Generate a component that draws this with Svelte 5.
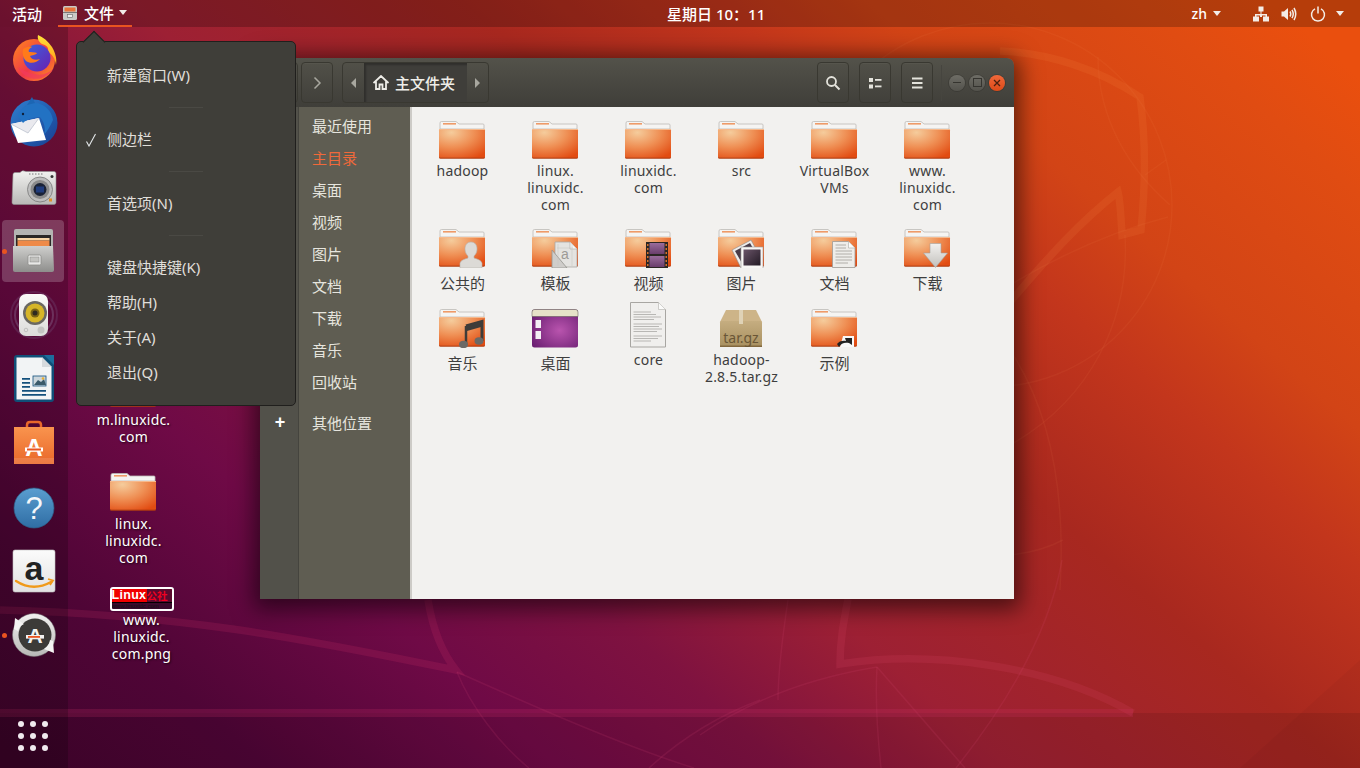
<script>
  const dockTop = ['firefox', 'thunderbird', 'camera', 'files', 'speaker', 'writer', 'store', 'help', 'amazon', 'updater']
  // vertical nudge of each dock icon inside its 64px cell
  const dockLift = { firefox: 2, thunderbird: 3, camera: 1.5, files: 0, speaker: 3, writer: 4, store: -1, help: 2, amazon: 3, updater: 3 }

  const menu = [
    { label: '新建窗口(W)', sep: true },
    { label: '侧边栏', check: true, sep: true },
    { label: '首选项(N)', sep: true },
    { label: '键盘快捷键(K)' },
    { label: '帮助(H)' },
    { label: '关于(A)' },
    { label: '退出(Q)' }
  ]

  const places = ['最近使用', '主目录', '桌面', '视频', '图片', '文档', '下载', '音乐', '回收站']

  const files = [
    { lines: ['hadoop'], icon: 'folder' },
    { lines: ['linux.', 'linuxidc.', 'com'], icon: 'folder' },
    { lines: ['linuxidc.', 'com'], icon: 'folder' },
    { lines: ['src'], icon: 'folder' },
    { lines: ['VirtualBox', 'VMs'], icon: 'folder' },
    { lines: ['www.', 'linuxidc.', 'com'], icon: 'folder' },
    { lines: ['公共的'], icon: 'folder', over: 'person', zh: true },
    { lines: ['模板'], icon: 'folder', over: 'template', zh: true },
    { lines: ['视频'], icon: 'folder', over: 'film', zh: true },
    { lines: ['图片'], icon: 'folder', over: 'photo', zh: true },
    { lines: ['文档'], icon: 'folder', over: 'doc', zh: true },
    { lines: ['下载'], icon: 'folder', over: 'down', zh: true },
    { lines: ['音乐'], icon: 'folder', over: 'note', zh: true },
    { lines: ['桌面'], icon: 'desktop', zh: true },
    { lines: ['core'], icon: 'text' },
    { lines: ['hadoop-', '2.8.5.tar.gz'], icon: 'tar' },
    { lines: ['示例'], icon: 'folder', over: 'link', zh: true }
  ]
</script>

{#snippet folderArt()}
  <path d="M2 17V11Q2 9.500 3.500 9.500H18L21 12H45Q46 12 46 13V17Z" fill="#f5f4f2" stroke="#bdbab6" stroke-width=".8" />
  <rect x="5" y="11" width="13" height="1.600" fill="#ee9a68" />
  <rect x="1" y="17" width="46" height="29.500" rx="1.500" fill="url(#folderBody)" />
  <path d="M1 18H47V17H1Z" fill="#f6b98c" />
  <path d="M2.500 46.500H45.500Q47 46.500 47 45V44.800Q47 45.800 45.500 45.800H2.500Q1 45.800 1 44.800V45Q1 46.500 2.500 46.500Z" fill="#97330d" />
{/snippet}

{#snippet overlay(kind)}
  {#if kind === 'person'}
    <path d="M33 22c-4 0-6 3-6 7 0 3 1 5 3 7v2c-3 1-7 2-8 5v5h22v-5c-1-3-5-4-8-5v-2c2-2 3-4 3-7 0-4-2-7-6-7z" fill="#dcdad6" stroke="#b5b2ac" stroke-width=".6" />
  {:else if kind === 'template'}
    <path d="M24 22H39L46 29V47H24Z" fill="#e4e3e0" stroke="#aaa8a4" stroke-width=".8" />
    <path d="M39 22V29H46" fill="#f5f5f3" stroke="#aaa8a4" stroke-width=".6" />
    <path d="M21 30L36 48H21Z" fill="#cfcdca" stroke="#96948f" stroke-width=".8" />
    <text x="30" y="39" font-size="14" fill="#9c9a96" font-family="Liberation Sans">a</text>
    <path d="M26 28H42M27 24V46M41 24V46" stroke="#c4c2be" stroke-width=".5" fill="none" />
  {:else if kind === 'film'}
    <rect x="22" y="22" width="22" height="26" fill="#2b2623" />
    <rect x="25.500" y="23" width="15" height="11" fill="url(#filmFrame)" />
    <rect x="25.500" y="36" width="15" height="11" fill="url(#filmFrame)" />
    <path d="M23 24h1.500v2H23zM23 28h1.500v2H23zM23 32h1.500v2H23zM23 36h1.500v2H23zM23 40h1.500v2H23zM23 44h1.500v2H23zM41.500 24H43v2h-1.500zM41.500 28H43v2h-1.500zM41.500 32H43v2h-1.500zM41.500 36H43v2h-1.500zM41.500 40H43v2h-1.500zM41.500 44H43v2h-1.500z" fill="#d2702c" />
  {:else if kind === 'photo'}
    <path d="M15 30L34 20L44 38L24 48Z" fill="#eeedeb" stroke="#8b8986" stroke-width=".6" />
    <path d="M18 31L33 23L41 37L26 45Z" fill="#4a3c48" />
    <rect x="24" y="27" width="22" height="21.500" fill="#f7f6f4" stroke="#9a9895" stroke-width=".6" />
    <rect x="26.500" y="29.500" width="17" height="16" fill="url(#photoFrame)" />
  {:else if kind === 'doc'}
    <path d="M22.500 21.500H38.500L45 28V47.500H22.500Z" fill="#eeedea" stroke="#9d9b97" stroke-width=".8" />
    <path d="M38.500 21.500V28H45" fill="#fbfbfa" stroke="#a9a7a3" stroke-width=".6" />
    <path d="M25.500 25H36M25.500 28H36M25.500 31H42M25.500 34H42M25.500 37H42M25.500 40H42M25.500 43H38" stroke="#a9a7a3" stroke-width=".9" />
  {:else if kind === 'down'}
    <path d="M27 23.500H38V33H44.500L32.500 47.500L20.500 33H27Z" fill="url(#downFill)" stroke="#a5a39f" stroke-width=".6" />
  {:else if kind === 'note'}
    <path d="M28 26L44 21.500V41" stroke="#3e3c39" stroke-width="3" fill="none" />
    <path d="M28 26V45" stroke="#3e3c39" stroke-width="2.500" fill="none" />
    <path d="M29 25L43 21V27L29 31Z" fill="#3e3c39" />
    <ellipse cx="25.500" cy="44.500" rx="4.500" ry="3.700" fill="#6b6966" />
    <ellipse cx="41" cy="41" rx="4.500" ry="3.700" fill="#6b6966" />
  {:else if kind === 'link'}
    <path d="M33 36H44V47H30Z" fill="#f8f8f8" />
    <path d="M27 44C29 41 33 40 36 41L35 38L42 38V45L39 43C35 42 31 43 29 47Z" fill="#222" />
  {/if}
{/snippet}

{#snippet fileIcon(kind, over)}
  <svg class="ficon" viewBox="0 0 48 48" width="48" height="48">
    {#if kind === 'folder'}
      {@render folderArt()}
      {@render overlay(over)}
    {:else if kind === 'desktop'}
      <rect x="1" y="9.500" width="46" height="38" rx="2.500" fill="url(#purpleBody)" />
      <path d="M1 16.500V12Q1 9.500 3.500 9.500H44.500Q47 9.500 47 12V16.500Z" fill="#e6e2c8" stroke="#55504a" stroke-width=".5" />
      <rect x="4.500" y="20" width="5.500" height="8" fill="#f3eef4" />
      <rect x="4.500" y="31" width="5.500" height="8" fill="#f3eef4" />
    {:else if kind === 'text'}
      <path d="M6.500 2.500H34.500L41.500 9.500V47H6.500Z" fill="#f0efed" stroke="#a8a6a2" />
      <path d="M34.500 2.500V9.500H41.500" fill="#fbfbfa" stroke="#bcbab6" stroke-width=".7" />
      <path d="M9.500 12H27M9.500 14.500H32M9.500 17H37M9.500 19.500H30M9.500 24H38M9.500 26.500H35M9.500 29H38M9.500 31.500H33M9.500 36H38M9.500 38.500H34M9.500 41H27" stroke="#aaa8a4" stroke-width=".8" />
    {:else if kind === 'tar'}
      <path d="M9 10H39L45 22H3Z" fill="#cdb488" />
      <rect x="3" y="21" width="42" height="26" rx="1.500" fill="url(#tarBody)" />
      <rect x="22" y="10" width="4" height="14" fill="#dfd2b6" />
      <rect x="3" y="45.500" width="42" height="1.500" fill="#82683e" />
      <text x="24" y="43" text-anchor="middle" font-size="14" font-family="Noto Sans" fill="#6a5636">tar.gz</text>
    {/if}
  </svg>
{/snippet}

{#snippet dockIcon(name)}
  <svg viewBox="0 {dockLift[name]} 64 64" width="64" height="64">
    {#if name === 'firefox'}
      <circle cx="33" cy="35" r="21" fill="url(#foxOuter)" />
      <path d="M37 10c5 2 10 6 14 12 4 7 5 13 4 18-1-7-4-11-8-13 1-5-2-7-6-8-3-2-5-5-4-9z" fill="url(#foxTail)" />
      <circle cx="36" cy="33" r="13.500" fill="url(#foxGlobe)" />
      <path d="M22 24c3-2 7-3 9-2-2 1-4 3-3 5 2 0 6 0 8 1-1 2-5 2-7 3 1 3 5 5 10 3-3 4-10 5-14 2-3-3-4-8-3-12z" fill="#ff7a1a" />
      <path d="M17 42c4 9 14 14 24 11 5-2 9-5 12-10-5 5-12 8-19 6-7-1-13-4-17-7z" fill="#f23a5c" opacity=".7" />
    {:else if name === 'thunderbird'}
      <circle cx="33" cy="35" r="23.500" fill="url(#tbBlue)" />
      <path d="M10 36L38 30L45 52L17 55Z" fill="#fff" />
      <path d="M10 36L27 45L38 30" fill="#e9e9ee" stroke="#b4bcc8" stroke-width=".7" />
      <path d="M17 28c3-9 10-13 17-13 9 0 17 8 18 17-3 7-6 11-9 15 2-7 0-13-4-18-6 0-13 2-17 6-2-3-3-5-5-7z" fill="#2272c3" />
      <circle cx="22" cy="26" r="1.200" fill="#10203a" />
      <path d="M31 9l3 6-8 2z" fill="#1c66b4" />
    {:else if name === 'camera'}
      <path d="M12 21Q12 19 14 19H19Q21 16 25 18H53Q55 18 55 20V49Q55 51 53 51H13Q11 51 11 49Z" fill="url(#silver)" stroke="#8d8d8d" stroke-width=".6" />
      <circle cx="39" cy="36" r="12.500" fill="#bdbdbd" stroke="#777" stroke-width=".8" />
      <circle cx="39" cy="36" r="9.500" fill="#8b8b8b" />
      <circle cx="39" cy="36" r="6.500" fill="#1a2236" />
      <rect x="35" y="33" width="8" height="6" fill="#203c7c" />
      <rect x="48" y="45" width="3" height="3" fill="#e09028" />
      <circle cx="51" cy="23" r="1.500" fill="#333" />
      <path d="M28 20.500h15" stroke="#777" stroke-width="1" stroke-dasharray="1.500 1.500" />
    {:else if name === 'files'}
      <path d="M13 12Q13 10 15 10H50Q52 10 52 12V28H13Z" fill="#b4b4b2" />
      <rect x="15" y="16" width="35" height="12" fill="#2a2826" />
      <rect x="16.500" y="19" width="32" height="2.500" fill="#f8d6a8" />
      <rect x="16.500" y="21.500" width="32" height="5.500" fill="#ee8a48" />
      <path d="M12 27H52L53 51Q53 53 51 53H14Q12 53 12 51Z" fill="url(#drawer)" />
      <rect x="27" y="36" width="13" height="10" rx="1.500" fill="#e8e8e6" stroke="#8b8b88" stroke-width=".8" />
      <rect x="29" y="38" width="9" height="5" fill="#c2c2bf" stroke="#777" stroke-width=".4" />
    {:else if name === 'speaker'}
      <circle cx="33" cy="35" r="23" fill="none" stroke="#8c8cb0" stroke-opacity=".18" stroke-width="2" />
      <circle cx="33" cy="35" r="19" fill="none" stroke="#a8a8c8" stroke-opacity=".25" stroke-width="2" />
      <rect x="18" y="14" width="29" height="42" rx="7" fill="url(#speakerBody)" />
      <circle cx="34" cy="33" r="12" fill="#6a6862" />
      <circle cx="34" cy="33" r="9.500" fill="#d6b528" />
      <circle cx="34" cy="33" r="4.500" fill="#7a6414" />
      <circle cx="34" cy="33" r="2.500" fill="#2e2a20" />
      <circle cx="40" cy="50" r="3.500" fill="#c4c4c2" />
      <circle cx="25" cy="50" r="1.800" fill="none" stroke="#c0c0be" />
    {:else if name === 'writer'}
      <path d="M13 15Q13 12 16 12H44L53 21V56Q53 59 50 59H16Q13 59 13 56Z" fill="#104f78" />
      <path d="M15.500 14.500H41L50.500 24V56.500H15.500Z" fill="#f2f4f5" />
      <path d="M43 12H53V22Z" fill="#1c6e9c" />
      <path d="M41 14L51 24H41Z" fill="#d6dadd" />
      <path d="M21 35h8v1.800h-8zM21 39h8v1.800h-8zM21 43h8v1.800h-8zM21 47h24v1.800H21zM21 51h24v1.800H21z" fill="#13507c" />
      <rect x="32" y="33" width="13" height="10" fill="#ccd6dc" stroke="#13507c" stroke-width=".8" />
      <path d="M33 42l4-5 3 2 3-3 2 6z" fill="#3a5a6a" />
      <circle cx="42" cy="35.500" r="1.300" fill="#eab030" />
    {:else if name === 'store'}
      <path d="M26 16V13Q26 10 29 10H37Q40 10 40 13V16" fill="none" stroke="#e9682a" stroke-width="2.500" />
      <path d="M13 15H53V52H13Z" fill="url(#storeBag)" />
      <rect x="13" y="46" width="40" height="6" fill="#ffffff" fill-opacity=".12" />
      <text x="33" y="44" text-anchor="middle" font-size="24" font-weight="700" font-family="Liberation Sans" fill="#fff">A</text>
      <rect x="24" y="35.500" width="18" height="4" fill="#fff" />
      <rect x="26" y="36.500" width="14" height="2" fill="#e95420" />
    {:else if name === 'help'}
      <circle cx="33" cy="35" r="20" fill="url(#helpBlue)" stroke="#2c5d86" stroke-width=".7" />
      <text x="33" y="46" text-anchor="middle" font-size="31" font-family="Liberation Sans" fill="#f4f7fa">?</text>
    {:else if name === 'amazon'}
      <rect x="12" y="14" width="42" height="42" rx="2" fill="url(#amazonBg)" stroke="#c4c4c4" stroke-width=".6" />
      <text x="33" y="44" text-anchor="middle" font-size="34" font-weight="700" font-family="Liberation Sans" fill="#222">a</text>
      <path d="M15 45Q32 56 50 46" fill="none" stroke="#f09a1a" stroke-width="2.400" stroke-linecap="round" />
      <path d="M47 43L52 44.500L49 49" fill="none" stroke="#f09a1a" stroke-width="1.800" />
    {:else if name === 'updater'}
      <circle cx="33" cy="35" r="21.500" fill="url(#silver)" stroke="#777" stroke-width=".5" />
      <circle cx="34" cy="35" r="16.500" fill="#3c3b38" />
      <text x="34" y="43" text-anchor="middle" font-size="21" font-weight="700" font-family="Liberation Sans" fill="#f2f2f0">A</text>
      <rect x="25" y="35" width="18" height="3.600" fill="#f2f2f0" />
      <rect x="27" y="36" width="12" height="1.800" fill="#e95420" />
      <path d="M13 29L14 18L23 24Q18 26 17 31Z" fill="#f4f4f2" />
      <path d="M52 41L53 53L43 49Q48 46 49 40Z" fill="#f4f4f2" />
    {/if}
  </svg>
{/snippet}

<div class="screen">
  <svg class="wall" viewBox="0 0 1360 768" width="1360" height="768" aria-hidden="true">
    <rect x="0" y="713" width="1360" height="55" fill="#000" fill-opacity=".09" />
    <path d="M1360 660L1240 768H1360Z" fill="#000" fill-opacity=".03" />
    <g fill="none" stroke="#ff9a60" stroke-opacity=".07" stroke-width="1.500">
      <circle cx="990" cy="205" r="182" />
      <path d="M1098 57C1098 120 1130 170 1170 205" />
      <path d="M1125 235C1130 320 1090 400 1010 445" />
      <path d="M1168 217C1110 232 1060 255 1010 285" />
      <path d="M1166 160L1145 175" />
      <path d="M1010 350C1050 410 1066 490 1060 590" />
      <path d="M1010 555Q1040 552 1063 540" />
    </g>
    <g fill="none" stroke="#e0507a" stroke-opacity=".13" stroke-width="1.500">
      <path d="M788 600C782 640 778 670 778 700" />
      <path d="M700 735C750 700 810 678 877 667" />
      <path d="M877 667C875 700 878 740 881 768" />
      <path d="M877 667L965 768" />
      <path d="M1062 560C1050 630 1010 700 956 768" />
      <path d="M457 672C520 700 620 745 694 768" />
      <path d="M457 672C470 705 500 745 529 768" />
      <path d="M649 768C685 735 720 715 760 700" />
    </g>
    <g fill="none" stroke-width="7.500" stroke-linejoin="miter">
      <path d="M1000 51C1050 53 1100 70 1140 97C1146 140 1146 180 1141 230L1122 235C1121 215 1120 200 1118 192C1080 222 1050 255 1010 302" stroke="#ff9a50" stroke-opacity=".11" />
      <path d="M0 610C200 615 330 645 456 670C440 650 432 625 428 600" stroke="#d0306a" stroke-opacity=".18" />
      <path d="M848 599C844 620 840 640 840 664C930 650 1050 665 1133 713" stroke="#d04060" stroke-opacity=".2" />
    </g>
    <rect x="0" y="709" width="1133" height="8" fill="#d0306a" fill-opacity=".2" />
  </svg>

  <svg class="defs" width="0" height="0" aria-hidden="true">
    <defs>
      <radialGradient id="folderBody" cx=".27" cy=".12" r="1">
        <stop offset="0" stop-color="#f5cc9c" />
        <stop offset=".5" stop-color="#ef8f54" />
        <stop offset="1" stop-color="#e24c12" />
      </radialGradient>
      <radialGradient id="purpleBody" cx=".6" cy=".55" r=".7">
        <stop offset="0" stop-color="#b954ae" />
        <stop offset="1" stop-color="#6b1f72" />
      </radialGradient>
      <linearGradient id="tarBody" x1="0" y1="0" x2="0" y2="1">
        <stop offset="0" stop-color="#c5ad80" />
        <stop offset="1" stop-color="#a89060" />
      </linearGradient>
      <linearGradient id="filmFrame" x1="0" y1="0" x2="0" y2="1">
        <stop offset="0" stop-color="#9a6c9c" />
        <stop offset="1" stop-color="#6a3e6c" />
      </linearGradient>
      <linearGradient id="photoFrame" x1="0" y1="0" x2="1" y2="1">
        <stop offset="0" stop-color="#6a5468" />
        <stop offset="1" stop-color="#221a24" />
      </linearGradient>
      <linearGradient id="downFill" x1="0" y1="0" x2="0" y2="1">
        <stop offset="0" stop-color="#f2f1ef" />
        <stop offset="1" stop-color="#c2c0bc" />
      </linearGradient>
      <linearGradient id="foxOuter" x1="0" y1="0" x2="1" y2="1">
        <stop offset="0" stop-color="#ff8a1a" />
        <stop offset=".55" stop-color="#f0384a" />
        <stop offset="1" stop-color="#ff9a18" />
      </linearGradient>
      <linearGradient id="foxTail" x1="0" y1="0" x2="0" y2="1">
        <stop offset="0" stop-color="#ffe43a" />
        <stop offset="1" stop-color="#ff9a16" />
      </linearGradient>
      <linearGradient id="foxGlobe" x1="0" y1="0" x2="1" y2="1">
        <stop offset="0" stop-color="#3a64e0" />
        <stop offset="1" stop-color="#6a1fb0" />
      </linearGradient>
      <linearGradient id="tbBlue" x1="0" y1="0" x2="1" y2="1">
        <stop offset="0" stop-color="#2f7fd0" />
        <stop offset="1" stop-color="#173f92" />
      </linearGradient>
      <linearGradient id="silver" x1="0" y1="0" x2="0" y2="1">
        <stop offset="0" stop-color="#f2f2f0" />
        <stop offset="1" stop-color="#b8b8b6" />
      </linearGradient>
      <linearGradient id="drawer" x1="0" y1="0" x2="0" y2="1">
        <stop offset="0" stop-color="#cfcfcd" />
        <stop offset="1" stop-color="#8e8e8c" />
      </linearGradient>
      <linearGradient id="speakerBody" x1="0" y1="0" x2="0" y2="1">
        <stop offset="0" stop-color="#fafaf8" />
        <stop offset="1" stop-color="#dcdcda" />
      </linearGradient>
      <linearGradient id="storeBag" x1="0" y1="0" x2="0" y2="1">
        <stop offset="0" stop-color="#f9944e" />
        <stop offset="1" stop-color="#e9682a" />
      </linearGradient>
      <linearGradient id="helpBlue" x1="0" y1="0" x2="0" y2="1">
        <stop offset="0" stop-color="#5a9ed0" />
        <stop offset="1" stop-color="#2f6da4" />
      </linearGradient>
      <linearGradient id="amazonBg" x1="0" y1="0" x2="0" y2="1">
        <stop offset="0" stop-color="#fbfbfb" />
        <stop offset="1" stop-color="#e2e2e2" />
      </linearGradient>
    </defs>
  </svg>

  <header class="topbar">
    <span class="activities">活动</span>
    <div class="appmenu">
      <svg viewBox="0 0 16 16" width="16" height="16">
        <rect x="1" y="1" width="14" height="14" rx="1.500" fill="#c9c9c6" />
        <rect x="2.500" y="2.500" width="11" height="4" fill="#e9743a" />
        <rect x="1" y="7" width="14" height="1" fill="#777" />
        <rect x="5.500" y="9.500" width="5" height="3" fill="#eee" stroke="#666" stroke-width=".6" />
      </svg>
      <span class="appname">文件</span>
      <i class="caret"></i>
    </div>
    <span class="clock">星期日 10：11</span>
    <div class="status">
      <span class="lang">zh</span>
      <i class="caret"></i>
      <svg class="net" viewBox="0 0 16 16" width="16" height="16">
        <path d="M5.500 0.500h5v5h-2v2.500H14v3h-1.500V9.500h-3.500v1.500H7V9.500H3.500v1.500H2V8h5.500V5.500h-2z" fill="#f4ece6" />
        <rect x="0" y="10.500" width="6" height="5" fill="#f4ece6" />
        <rect x="10" y="10.500" width="6" height="5" fill="#f4ece6" />
      </svg>
      <svg class="vol" viewBox="0 0 16 16" width="16" height="16">
        <path d="M0.500 5.500H3L7 2V14L3 10.500H0.500Z" fill="#f4ece6" />
        <path d="M9 5.500Q10.500 8 9 10.500M11 3.800Q13.500 8 11 12.200M13 2Q16.500 8 13 14" fill="none" stroke="#f4ece6" stroke-width="1.500" />
      </svg>
      <svg class="pow" viewBox="0 0 16 16" width="16" height="16">
        <path d="M5 2.800A6.500 6.500 0 1 0 11 2.800" fill="none" stroke="#f4ece6" stroke-width="1.500" />
        <path d="M8 0.500V7.500" stroke="#f4ece6" stroke-width="1.500" />
      </svg>
      <i class="caret"></i>
    </div>
  </header>

  <div class="below">
    <nav class="dock">
      {#each dockTop as name}
        <div class="dockitem" class:active={name === 'files'} class:running={name === 'files' || name === 'updater'}>
          {@render dockIcon(name)}
        </div>
      {/each}
      <div class="grid9">
        {#each Array(9) as _}
          <i></i>
        {/each}
      </div>
    </nav>

    <section class="desk">
      <div class="deskitem">
        <svg class="ficon" viewBox="0 0 48 48" width="48" height="48">{@render folderArt()}</svg>
        <div class="desklabel"><span>m.linuxidc.</span><span>com</span></div>
      </div>
      <div class="deskitem">
        <svg class="ficon" viewBox="0 0 48 48" width="48" height="48">{@render folderArt()}</svg>
        <div class="desklabel"><span>linux.</span><span>linuxidc.</span><span>com</span></div>
      </div>
      <div class="deskitem png">
        <div class="thumb">
          <div class="thumbtop"><b>Linux</b><em>公社</em></div>
          <div class="thumbbot">www.linuxidc.com</div>
        </div>
        <div class="desklabel"><span>www.</span><span>linuxidc.</span><span>com.png</span></div>
      </div>
    </section>
  </div>

  <div class="window">
    <div class="headerbar">
      <div class="hbtn">
        <svg viewBox="0 0 16 16" width="16" height="16"><path d="M10.500 2.500L5 8L10.500 13.500" fill="none" stroke="#a8a79f" stroke-width="1.500" /></svg>
      </div>
      <div class="hbtn fwd">
        <svg viewBox="0 0 16 16" width="16" height="16"><path d="M5.500 2.500L11 8L5.500 13.500" fill="none" stroke="#a8a79f" stroke-width="1.500" /></svg>
      </div>
      <div class="pathbar">
        <div class="seg arrow"><i class="tri left"></i></div>
        <div class="seg current">
          <svg viewBox="0 0 16 16" width="16" height="16">
            <path d="M0.500 8L8 1L15.500 8M3 6.500V14H6.500V9.500H9.500V14H13V6.500" fill="none" stroke="#eeede8" stroke-width="1.800" />
          </svg>
          <span>主文件夹</span>
        </div>
        <div class="seg arrow"><i class="tri right"></i></div>
      </div>
      <div class="hright">
        <div class="hbtn">
          <svg viewBox="0 0 16 16" width="16" height="16">
            <circle cx="6.500" cy="6.500" r="4.500" fill="none" stroke="#e4e3dc" stroke-width="1.800" />
            <path d="M10 10L14.500 14.500" stroke="#e4e3dc" stroke-width="2" />
          </svg>
        </div>
        <div class="hbtn">
          <svg viewBox="0 0 16 16" width="16" height="16">
            <rect x="2" y="3" width="4" height="4" fill="#e4e3dc" />
            <rect x="2" y="9.500" width="4" height="4" fill="#e4e3dc" />
            <rect x="8" y="4" width="6.500" height="1.800" fill="#e4e3dc" />
            <rect x="8" y="10.500" width="6.500" height="1.800" fill="#e4e3dc" />
          </svg>
        </div>
        <div class="hbtn">
          <svg viewBox="0 0 16 16" width="16" height="16">
            <path d="M3 3.500H13.500M3 8H13.500M3 12.500H13.500" stroke="#e4e3dc" stroke-width="2" />
          </svg>
        </div>
        <span class="vsep"></span>
        <div class="winctl">
          <span class="wbtn"><i class="w-min"></i></span>
          <span class="wbtn"><i class="w-max"></i></span>
          <span class="wbtn close">
            <svg viewBox="0 0 8 8" width="8" height="8"><path d="M1 1L7 7M7 1L1 7" stroke="#4a2010" stroke-width="1.300" /></svg>
          </span>
        </div>
      </div>
    </div>
    <div class="content">
      <aside class="side">
        {#each places as place, i}
          <div class="row" class:current={i === 1}><span class="gutter"></span><span>{place}</span></div>
        {/each}
        <div class="row other"><span class="gutter plus">+</span><span>其他位置</span></div>
      </aside>
      <main class="files">
        {#each files as f}
          <div class="file" class:zh={f.zh}>
            {@render fileIcon(f.icon, f.over)}
            <div class="flabel">
              {#each f.lines as line}
                <span>{line}</span>
              {/each}
            </div>
          </div>
        {/each}
      </main>
    </div>
  </div>

  <div class="popover">
    {#each menu as item}
      <div class="mitem">
        {#if item.check}
          <svg class="check" viewBox="0 0 12 14" width="12" height="14">
            <path d="M1.500 8.500L4 13L10.500 1" fill="none" stroke="#e4e8ea" stroke-width="1.100" />
          </svg>
        {/if}
        {item.label}
      </div>
      {#if item.sep}
        <div class="msep"><i></i></div>
      {/if}
    {/each}
  </div>
</div>

<style>
  :global(body) {
    margin: 0;
    background: #300a24;
  }
  .screen {
    position: relative;
    width: 1360px;
    height: 768px;
    overflow: hidden;
    display: flex;
    flex-direction: column;
    font-family: "Noto Sans", "Noto Sans CJK SC", sans-serif;
    font-size: 14px;
    background: linear-gradient(41deg, #42042d 0%, #4f0536 12%, #6f0a46 25%, #7f1240 35%, #9d2034 45%, #a8281f 60%, #c3361c 71%, #d24416 78%, #e04c12 90%, #ea4f0e 96%);
  }
  .wall {
    position: absolute;
    left: 0;
    top: 0;
  }
  .defs {
    position: absolute;
  }

  .topbar {
    position: relative;
    height: 27px;
    flex: none;
    display: flex;
    align-items: center;
    color: #fff;
    background: rgba(0, 0, 0, 0.22);
    font-weight: 500;
    font-size: 15px;
  }
  .activities {
    margin-left: 12px;
    width: 46px;
  }
  .appmenu {
    width: 74px;
    height: 27px;
    box-sizing: border-box;
    border-bottom: 2px solid #e95420;
    display: flex;
    align-items: center;
    padding-left: 4px;
  }
  .appname {
    margin-left: 6px;
    margin-right: 5px;
  }
  .caret {
    width: 0;
    height: 0;
    border-left: 4.500px solid transparent;
    border-right: 4.500px solid transparent;
    border-top: 5px solid #f2ece8;
    display: block;
  }
  .clock {
    margin-left: 535px;
  }
  .status {
    margin-left: auto;
    display: flex;
    align-items: center;
    padding-right: 16px;
  }
  .lang {
    margin-right: 6px;
    font-size: 14px;
  }
  .net {
    margin-left: 32px;
  }
  .vol {
    margin-left: 12px;
  }
  .pow {
    margin-left: 13px;
    margin-right: 10px;
  }

  .below {
    position: relative;
    flex: 1;
    display: flex;
    min-height: 0;
  }
  .dock {
    width: 68px;
    flex: none;
    display: flex;
    flex-direction: column;
    background: rgba(0, 0, 0, 0.2);
  }
  .dockitem {
    position: relative;
    height: 64px;
    margin-left: 1px;
    width: 64px;
  }
  .dockitem svg {
    display: block;
  }
  .dockitem.active::before {
    content: "";
    position: absolute;
    left: 1px;
    top: 1px;
    width: 62px;
    height: 62px;
    border-radius: 4px;
    background: rgba(255, 255, 255, 0.2);
  }
  .dockitem.active svg {
    position: relative;
  }
  .dockitem.running::after {
    content: "";
    position: absolute;
    left: 1px;
    top: 29.500px;
    width: 5px;
    height: 5px;
    border-radius: 50%;
    background: #e95420;
  }
  .grid9 {
    margin-top: auto;
    margin-bottom: 17px;
    margin-left: 18px;
    display: grid;
    grid-template-columns: repeat(3, 6px);
    gap: 6px;
  }
  .grid9 i {
    width: 6px;
    height: 6px;
    border-radius: 50%;
    background: #f0eaee;
  }

  .desk {
    padding-top: 333px;
    padding-left: 19px;
    color: #fff;
  }
  .deskitem {
    width: 93px;
    height: 104px;
    display: flex;
    flex-direction: column;
    align-items: center;
  }
  .deskitem.png {
    margin-left: 8px;
    padding-top: 19px;
  }
  .ficon {
    display: block;
    flex: none;
    margin-left: -2px;
  }
  .desklabel {
    margin-top: 3px;
    line-height: 17px;
    text-align: center;
    text-shadow: 1px 1px 2px rgba(0, 0, 0, 0.7);
    letter-spacing: 0.2px;
  }
  .deskitem.png .desklabel {
    margin-top: 0;
  }
  .desklabel span {
    display: block;
  }
  .thumb {
    width: 60px;
    height: 20px;
    border: 2px solid #fff;
    border-radius: 3px;
    background: #fff;
    overflow: hidden;
    flex: none;
  }
  .thumbtop {
    height: 13px;
    display: flex;
    background: #f00000;
    font-family: "Liberation Sans", sans-serif;
    line-height: 13px;
  }
  .thumbtop b {
    font-size: 12.500px;
    color: #fff;
    width: 35px;
    letter-spacing: 0.300px;
  }
  .thumbtop em {
    font-style: normal;
    font-size: 10.500px;
    font-weight: 700;
    color: #f00020;
    flex: 1;
    background: #5a0a2e;
    font-family: "Noto Sans CJK SC", sans-serif;
    line-height: 13px;
  }
  .thumbbot {
    height: 7px;
    border-top: 1px solid #000;
    background: #3a0a2c;
    color: #111;
    font-size: 6px;
    line-height: 6px;
    font-family: "Liberation Sans", sans-serif;
    white-space: nowrap;
  }

  .window {
    position: absolute;
    left: 260px;
    top: 58px;
    width: 754px;
    height: 541px;
    display: flex;
    flex-direction: column;
    border-radius: 7px 7px 0 0;
    box-shadow: 0 4px 22px 6px rgba(0, 0, 0, 0.55);
  }
  .headerbar {
    height: 49px;
    flex: none;
    box-sizing: border-box;
    display: flex;
    align-items: center;
    padding: 0 9px 0 6px;
    border-radius: 7px 7px 0 0;
    background: linear-gradient(#53524a, #3f3e39);
  }
  .hbtn {
    width: 32px;
    height: 41px;
    box-sizing: border-box;
    border: 1px solid #393831;
    border-radius: 4px;
    display: flex;
    align-items: center;
    justify-content: center;
    box-shadow: inset 0 1px rgba(255, 255, 255, 0.03);
  }
  .hbtn.fwd {
    margin-left: 3px;
  }
  .pathbar {
    margin-left: 9px;
    height: 41px;
    display: flex;
    box-sizing: border-box;
    border: 1px solid #393831;
    border-radius: 4px;
    color: #eeede8;
  }
  .seg {
    display: flex;
    align-items: center;
    justify-content: center;
  }
  .seg.arrow {
    width: 21px;
  }
  .seg.current {
    width: 103px;
    box-sizing: border-box;
    justify-content: flex-start;
    padding-left: 9px;
    gap: 6px;
    background: #3f3e3a;
    box-shadow: inset 2px 2px 2px rgba(0, 0, 0, 0.25);
    font-size: 15px;
    font-weight: 500;
  }
  .tri {
    width: 0;
    height: 0;
    border-top: 5px solid transparent;
    border-bottom: 5px solid transparent;
  }
  .tri.left {
    border-right: 5px solid #a8a79f;
  }
  .tri.right {
    border-left: 5px solid #a8a79f;
  }
  .hright {
    margin-left: auto;
    display: flex;
    align-items: center;
    gap: 10px;
  }
  .vsep {
    width: 1px;
    height: 36px;
    margin-left: -2px;
    background: #46453f;
  }
  .winctl {
    display: flex;
    gap: 4px;
    margin-left: -3px;
  }
  .wbtn {
    width: 16px;
    height: 16px;
    border-radius: 50%;
    display: flex;
    align-items: center;
    justify-content: center;
    background: linear-gradient(#6e6d66, #53524c);
    box-shadow: 0 0 0 1px rgba(0, 0, 0, 0.15);
  }
  .wbtn.close {
    background: linear-gradient(#f0683a, #dc4a18);
  }
  .w-min {
    width: 8px;
    height: 1px;
    background: #35342f;
  }
  .w-max {
    width: 7px;
    height: 7px;
    border: 1px solid #35342f;
  }

  .content {
    flex: 1;
    display: flex;
    min-height: 0;
  }
  .side {
    width: 150px;
    flex: none;
    padding-top: 2px;
    border-right: 2px solid #cdcbc7;
    color: #e6e5de;
    font-size: 15px;
    background: linear-gradient(to right, #52514a 38px, #45443e 38px, #45443e 39px, #5f5d52 39px);
  }
  .row {
    height: 32px;
    display: flex;
    align-items: center;
  }
  .row.current {
    color: #f0693a;
  }
  .row.other {
    margin-top: 9px;
  }
  .gutter {
    width: 52px;
    flex: none;
    text-align: center;
    padding-right: 12px;
    box-sizing: border-box;
  }
  .plus {
    color: #fff;
    font-size: 18px;
    font-weight: 700;
    line-height: 18px;
    font-family: "Liberation Sans", sans-serif;
  }

  .files {
    flex: 1;
    background: #f2f1ef;
    box-sizing: border-box;
    padding: 5px 0 0 4px;
    display: grid;
    grid-template-columns: repeat(6, 93px);
    grid-template-rows: 108px 80px auto;
    color: #3e3e3e;
  }
  .file {
    display: flex;
    flex-direction: column;
    align-items: center;
  }
  .file:nth-child(-n+6) .flabel {
    margin-top: 2px;
  }
  .flabel {
    margin-top: 3px;
    line-height: 17px;
    text-align: center;
    letter-spacing: 0.2px;
    white-space: nowrap;
  }
  .file.zh .flabel {
    margin-top: 5px;
    line-height: 20px;
    font-size: 15px;
    letter-spacing: 0;
  }
  .flabel span {
    display: block;
  }

  .popover {
    position: absolute;
    left: 76px;
    top: 41px;
    width: 218px;
    box-sizing: content-box;
    padding: 16px 0 15px;
    border: 1px solid #201f1d;
    border-radius: 5px;
    background: #3f3e39;
    color: #e0dfda;
    font-size: 15px;
  }
  .popover::before {
    content: "";
    position: absolute;
    left: 9px;
    top: -8px;
    width: 16px;
    height: 16px;
    transform: rotate(45deg);
    background: #3f3e39;
    border-left: 1px solid #201f1d;
    border-top: 1px solid #201f1d;
    box-sizing: border-box;
  }
  .mitem {
    position: relative;
    height: 35px;
    line-height: 35px;
    padding-left: 30px;
  }
  .check {
    position: absolute;
    left: 8px;
    top: 11px;
  }
  .msep {
    height: 29px;
    display: flex;
    align-items: center;
    justify-content: center;
  }
  .msep i {
    width: 34px;
    height: 1px;
    background: #4a4944;
  }
</style>
